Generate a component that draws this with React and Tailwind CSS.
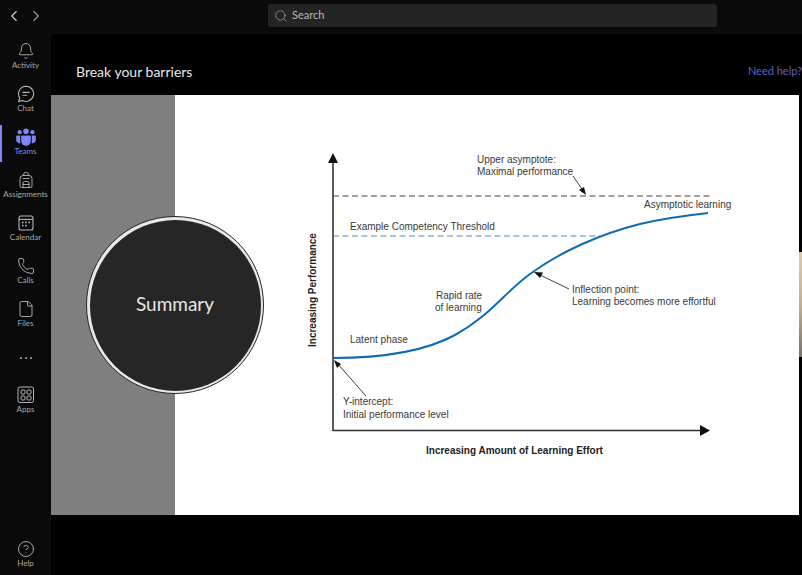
import { Bell, Phone, File, HelpCircle, ChevronLeft, ChevronRight, Search, Backpack } from "lucide-react";

const sans = { fontFamily: '"Liberation Sans", Arial, sans-serif' };

const TeamsIcon = () => (
  <svg width="20" height="18" viewBox="0 0 20 18" fill="#7f85f5">
    <circle cx="10" cy="3.2" r="2.8" />
    <circle cx="3.6" cy="4.2" r="2.1" />
    <circle cx="16.4" cy="4.2" r="2.1" />
    <path d="M6 7.5h8a.8.8 0 0 1 .8.8v4.7a4.8 4.8 0 0 1-9.6 0V8.3a.8.8 0 0 1 .8-.8z" />
    <path d="M1 7.5h3.2v5.8c0 .9.1 1.4.3 2A3.6 3.6 0 0 1 .2 11.9V8.3a.8.8 0 0 1 .8-.8z" />
    <path d="M19 7.5h-3.2v5.8c0 .9-.1 1.4-.3 2a3.6 3.6 0 0 0 4.3-3.4V8.3a.8.8 0 0 0-.8-.8z" />
  </svg>
);

const ChatIcon = () => (
  <svg width="18" height="18" viewBox="0 0 18 18" fill="none" stroke="#b5b5b5" strokeWidth="1.1">
    <path d="M9 1.2a7.6 7.6 0 1 1-3.6 14.3L1.6 16.6l1.1-3.7A7.6 7.6 0 0 1 9 1.2z" strokeLinejoin="round" />
    <path d="M6 7.4h6M6 10.2h3.8" strokeLinecap="round" />
  </svg>
);

const CalendarIcon = () => (
  <svg width="18" height="18" viewBox="0 0 18 18" fill="none" stroke="#b5b5b5" strokeWidth="1.1">
    <rect x="2" y="2" width="14" height="14" rx="2" />
    <path d="M2 5.4h14" />
    <g fill="#b5b5b5" stroke="none">
      <rect x="5" y="7.6" width="1.6" height="1.6" />
      <rect x="8.2" y="7.6" width="1.6" height="1.6" />
      <rect x="11.4" y="7.6" width="1.6" height="1.6" />
      <rect x="5" y="10.8" width="1.6" height="1.6" />
      <rect x="8.2" y="10.8" width="1.6" height="1.6" />
    </g>
  </svg>
);

const AppsIcon = () => (
  <svg width="18" height="18" viewBox="0 0 18 18" fill="none" stroke="#b5b5b5" strokeWidth="1">
    <rect x="1" y="1" width="15.5" height="15.5" rx="2" />
    <rect x="4" y="4" width="4" height="4" rx="1" />
    <rect x="10" y="4" width="4" height="4" rx="1" />
    <rect x="4" y="10" width="4" height="4" rx="1" />
    <rect x="10" y="10" width="4" height="4" rx="1" />
  </svg>
);

const NavItem = ({ icon, label, active }) => (
  <div className="relative h-[43px] flex flex-col items-center justify-start">
    {active && <div className="absolute left-0 top-[-3px] h-[37px] w-[2px] bg-[#7f85f5]" />}
    <div className="h-[18px] flex items-center justify-center">{icon}</div>
    <span className={`text-[8px] leading-[11px] whitespace-nowrap ${active ? "text-[#7f85f5]" : "text-[#a8a8a8]"}`}>{label}</span>
  </div>
);

const iconProps = { size: 18, color: "#b5b5b5", strokeWidth: 1.2 };

const Chart = () => (
  <svg width="100%" height="100%" viewBox="175 95 624 420" style={sans}>
    {/* axes */}
    <line x1="333" y1="160" x2="333" y2="431" stroke="#333" strokeWidth="1.6" />
    <line x1="333" y1="430.5" x2="702" y2="430.5" stroke="#333" strokeWidth="1.6" />
    <path d="M328 163L333 153L338 163Z" fill="#111" />
    <path d="M700 425L710 430.5L700 436Z" fill="#111" />
    {/* dashed levels */}
    <line x1="333" y1="196" x2="713" y2="196" stroke="#444" strokeWidth="1" strokeDasharray="6 3.5" />
    <line x1="333" y1="236" x2="600" y2="236" stroke="#4f8fa5" strokeWidth="1" strokeDasharray="6 3.5" />
    {/* curve */}
    <path d="M333 358 C370 358 420 354 455 335 C490 316 505 292 530 274 C560 252 600 234 640 224 C665 218 690 215 708 213" fill="none" stroke="#0f6cb0" strokeWidth="2" />
    {/* arrows */}
    <line x1="573" y1="176" x2="584" y2="192" stroke="#444" strokeWidth="1" />
    <path d="M586 195L579 190L584 187Z" fill="#111" />
    <line x1="569" y1="289" x2="538" y2="274" stroke="#444" strokeWidth="1" />
    <path d="M534 272L543 272.5L540 278Z" fill="#111" />
    <line x1="366" y1="396" x2="337" y2="363" stroke="#444" strokeWidth="1" />
    <path d="M334 360L341 364L337 368Z" fill="#111" />
    {/* labels */}
    <g fontSize="10" fill="#3a3a3a">
      <text x="477" y="163">Upper asymptote:</text>
      <text x="477" y="175">Maximal performance</text>
      <text x="644" y="208">Asymptotic learning</text>
      <text x="350" y="230">Example Competency Threshold</text>
      <text x="436" y="299">Rapid rate</text>
      <text x="435" y="311">of learning</text>
      <text x="572" y="293">Inflection point:</text>
      <text x="572" y="305">Learning becomes more effortful</text>
      <text x="350" y="343">Latent phase</text>
      <text x="343" y="405">Y-intercept:</text>
      <text x="343" y="418">Initial performance level</text>
    </g>
    <text x="426" y="454" fontSize="10" fontWeight="700" fill="#222">Increasing Amount of Learning Effort</text>
    <text x="0" y="0" fontSize="10" fontWeight="700" fill="#222" transform="translate(316 347) rotate(-90)">Increasing Performance</text>
  </svg>
);

export default function App() {
  return (
    <div className="w-[802px] h-[575px] flex flex-col bg-black overflow-hidden" style={{ fontFamily: 'Lato, sans-serif' }}>
      <div className="h-[34px] shrink-0 bg-[#0a0a0a] flex items-center pl-[5px]">
        <div className="w-[263px] flex gap-[4px] mt-[-3px]">
          <ChevronLeft size={18} color="#d0d0d0" strokeWidth={1.5} />
          <ChevronRight size={18} color="#9a9a9a" strokeWidth={1.5} />
        </div>
        <div className="w-[449px] h-[23px] mt-[-3px] rounded-[3px] bg-[#242424] flex items-center gap-[4px] pl-[6px]">
          <Search size={14} color="#a0a0a0" strokeWidth={1.3} />
          <span className="text-[11px] text-[#b8b8b8]">Search</span>
        </div>
      </div>
      <div className="flex flex-1 min-h-0">
        <div className="w-[51px] shrink-0 bg-[#0a0a0a] flex flex-col pt-[8px] pb-[6px]">
          <NavItem icon={<Bell {...iconProps} />} label="Activity" />
          <NavItem icon={<ChatIcon />} label="Chat" />
          <NavItem icon={<TeamsIcon />} label="Teams" active />
          <NavItem icon={<Backpack {...iconProps} />} label="Assignments" />
          <NavItem icon={<CalendarIcon />} label="Calendar" />
          <NavItem icon={<Phone {...iconProps} />} label="Calls" />
          <NavItem icon={<File {...iconProps} />} label="Files" />
          <div className="h-[43px] flex justify-center gap-[3px] pt-[14px]">
            <span className="w-[2px] h-[2px] rounded-full bg-[#b5b5b5]" />
            <span className="w-[2px] h-[2px] rounded-full bg-[#b5b5b5]" />
            <span className="w-[2px] h-[2px] rounded-full bg-[#b5b5b5]" />
          </div>
          <NavItem icon={<AppsIcon />} label="Apps" />
          <div className="mt-auto">
            <div className="flex flex-col items-center">
              <HelpCircle {...iconProps} />
              <span className="text-[8px] leading-[11px] text-[#a8a8a8]">Help</span>
            </div>
          </div>
        </div>
        <div className="flex-1 min-w-0 flex flex-col">
          <div className="h-[61px] shrink-0 flex items-center justify-between pl-[25px] pt-[13px]">
            <span className="text-[14px] text-[#e8e8e8]">Break your barriers</span>
            <span className="text-[11px] text-[#5f63c4] whitespace-nowrap">Need help?</span>
          </div>
          <div className="relative h-[420px] w-[748px] shrink-0 flex">
            <div className="w-[124px] bg-[#7f7f7f]" />
            <div className="flex-1 bg-white"><Chart /></div>
            <div className="absolute left-[35px] top-[121px] w-[178px] h-[178px] rounded-full border-[1.5px] border-[#262626] bg-[#e8e8e8] p-[2.5px]">
              <div className="w-full h-full rounded-full bg-[#262626] flex items-center justify-center">
                <span className="text-[19px] text-[#e6e6e6] mt-[-2px]">Summary</span>
              </div>
            </div>
          </div>
          <div className="absolute left-[799px] top-[252px] w-[3px] h-[105px] bg-linear-to-b from-[#dccba9] via-[#c4b08f] to-[#77736e]" />
        </div>
      </div>
    </div>
  );
}
